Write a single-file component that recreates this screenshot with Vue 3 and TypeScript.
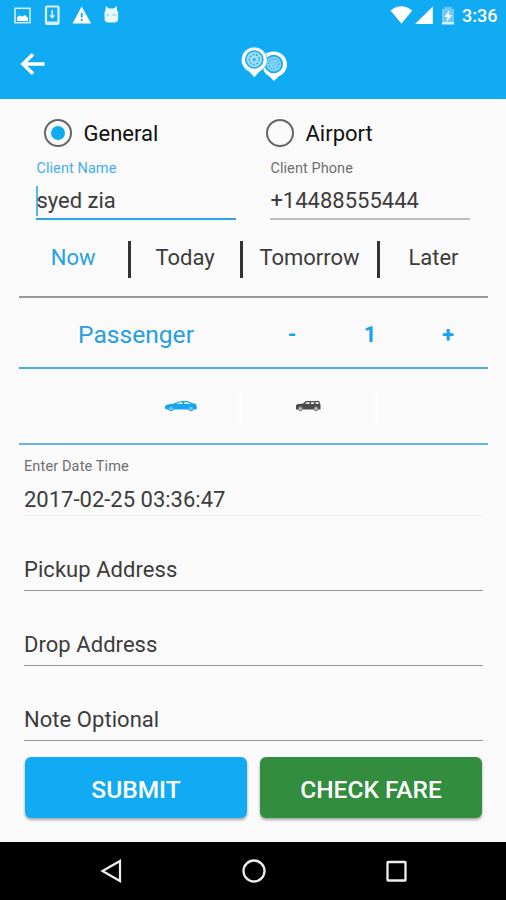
<script setup lang="ts">
import { ref } from 'vue'

const trip = ref<'General' | 'Airport'>('General')
const days = ['Now', 'Today', 'Tomorrow', 'Later']
const day = ref('Now')
const passengers = ref(1)
const notes = ['Pickup Address', 'Drop Address', 'Note Optional']
</script>

<template>
  <div class="screen">
    <header class="top">
      <div class="status">
        <svg class="status-icons" width="130" height="31" viewBox="0 0 130 31">
          <g fill="none" stroke="#d9f1ff" stroke-width="1.5">
            <rect x="15" y="8.3" width="15" height="14.4" />
            <rect x="46" y="6.5" width="12.5" height="17.5" rx="1" stroke-width="2.2" />
            <path d="M46 22.8h12.5" stroke-width="2.6" />
            <path d="M52.2 10v7M50 15.2l2.2 2.5 2.2-2.5" />
          </g>
          <path d="M17 21v-4l3-1.5 2 1 3-1.500 3 3V21z" fill="#fff" />
          <path fill-rule="evenodd" d="M81.700 6.500 91 23.500H72.500zM80.800 13v4.500h1.800V13zM80.800 19v2h1.800v-2z" fill="#fff" />
          <path d="M104.500 12 105.500 10.500 105.800 6 109 8.500h4.500L117 6v4.500l1.200 1.500v6.500q0 4-4 4h-5.700q-4 0-4-4z" fill="#e9f8ff" />
          <path d="M106.500 15h3M112.500 15h3.500" stroke="#6bcaf7" stroke-width="1.200" />
        </svg>
        <svg class="status-icons" width="74" height="31" viewBox="388 0 74 31">
          <path d="M390.500 10.500q10.800-8.500 21.700 0L401.500 23.800zM415 24l17.800-17.500V24z" fill="#fff" />
          <path d="M442 9h2.500V6.800h7V9h2.500v15h-12z" fill="#70cbf7" />
          <path d="m449.500 10-5 7h3l-1 5 5.500-7h-3.300z" fill="#fff" />
          <path d="M442 22h12v2.500h-12z" fill="#d9f1ff" />
        </svg>
        <span class="clock">3:36</span>
      </div>
      <div class="bar">
        <svg class="back" width="26" height="24" viewBox="0 0 26 24">
          <path d="M24.500 12H3M13 2.200 3 12l10 9.800" fill="none" stroke="#fff" stroke-width="3.600" />
        </svg>
        <svg class="logo" width="50" height="38" viewBox="239 45 50 38">
          <path d="M264.500 54.500Q268 51.500 274 51.500a13 13 0 0 1 13 13c0 6.500-5 10.500-8.500 12L274 81l-4.500-4.500q-4-1.800-6-6z" fill="#fff" />
          <circle cx="273.700" cy="64" r="9.300" fill="#11abf3" />
          <circle cx="273.700" cy="64" r="7.600" fill="#8ad4f8" />
          <circle cx="273.700" cy="64" r="5" fill="none" stroke="#25b0f3" stroke-width="1.200" stroke-dasharray="1.700 1.300" />
          <circle cx="273.700" cy="64" r="2" fill="none" stroke="#25b0f3" stroke-dasharray="1 1" />
          <path d="M254.300 47a13 13 0 0 1 13 13c0 6-4 9.500-8 12l-5 5.500-5-5.500c-4-2.500-8-6-8-12a13 13 0 0 1 13-13z" fill="#fff" stroke="#11abf3" stroke-width=".6" />
          <circle cx="254.300" cy="59.500" r="9.300" fill="#11abf3" />
          <circle cx="254.300" cy="59.500" r="7.800" fill="#a4ddfa" />
          <circle cx="254.300" cy="59.500" r="5" fill="none" stroke="#20aef3" stroke-width="1.400" stroke-dasharray="2 1.500" />
          <circle cx="254.300" cy="59.500" r="1.500" fill="#20aef3" />
        </svg>
      </div>
    </header>

    <main class="form">
      <div class="two radios">
        <label v-for="name in (['General', 'Airport'] as const)" :key="name" class="radio" @click="trip = name">
          <span class="ring"><span v-if="trip === name" class="dot" /></span>
          <span class="radio-name">{{ name }}</span>
        </label>
      </div>

      <div class="two client">
        <div class="field focused">
          <div class="label">Client Name</div>
          <div class="value"><span class="caret" /><span>syed zia</span></div>
        </div>
        <div class="field">
          <div class="label">Client Phone</div>
          <div class="value">+14488555444</div>
        </div>
      </div>

      <nav class="days">
        <button v-for="d in days" :key="d" class="day" :class="{ active: day === d }" @click="day = d">{{ d }}</button>
      </nav>

      <div class="passengers">
        <span class="title">Passenger</span>
        <button class="step" @click="passengers = Math.max(1, passengers - 1)">-</button>
        <span class="step">{{ passengers }}</span>
        <button class="step" @click="passengers++">+</button>
      </div>

      <div class="cars">
        <div class="car">
          <svg width="34" height="12" viewBox="0 0 34 12">
            <path d="M1 7q0-2 3-2.500l6-1Q14 1 18 1h4q3 0 6 2l4 1 1 4-1 1.500H2L1 8z" fill="#18a4ec" />
            <path d="m12 4 4-1.800h2.500V4zM20 2.200h2.500Q25 2.500 27 4h-7z" fill="#d9f1fc" />
            <circle cx="7" cy="8.500" r="2.300" fill="#74c8f3" stroke="#18a4ec" />
            <circle cx="27" cy="8.500" r="2.300" fill="#74c8f3" stroke="#18a4ec" />
          </svg>
        </div>
        <div class="car">
          <svg width="27" height="12" viewBox="0 0 27 12">
            <path d="M1 6q0-2 3-2l4-.5L11 1h13l1.500 4v4.500H1z" fill="#4a4a4a" />
            <path d="m10 4 2-2h2.500v2zM16 2h3v2h-3zM20.500 2H23l1 2h-3.500z" fill="#ddd" />
            <circle cx="5.500" cy="8.700" r="2" fill="#bbb" stroke="#777" />
            <circle cx="21" cy="8.700" r="2" fill="#bbb" stroke="#777" />
          </svg>
        </div>
      </div>

      <section class="details">
        <div class="date">
          <div class="label date-label">Enter Date Time</div>
          <div class="date-value">2017-02-25 03:36:47</div>
        </div>
        <div v-for="n in notes" :key="n" class="entry">{{ n }}</div>
        <div class="actions">
          <button class="action submit">SUBMIT</button>
          <button class="action fare">CHECK FARE</button>
        </div>
      </section>
    </main>

    <footer class="nav">
      <svg width="24" height="26" viewBox="0 0 24 26"><path d="M21 3v20L3.500 13z" fill="none" stroke="#eee" stroke-width="2.200" /></svg>
      <svg width="26" height="26" viewBox="0 0 26 26"><circle cx="13" cy="13" r="10.500" fill="none" stroke="#eee" stroke-width="2.300" /></svg>
      <svg width="24" height="26" viewBox="0 0 24 26"><rect x="2.500" y="4" width="18" height="18.500" rx=".5" fill="none" stroke="#eee" stroke-width="2.300" /></svg>
    </footer>
  </div>
</template>

<style>
body {
  margin: 0;
}
</style>

<style scoped>
.screen {
  box-sizing: border-box;
  width: 506px;
  height: 900px;
  display: flex;
  flex-direction: column;
  background: #fafafa;
  color: #3c3c3c;
  font: 400 22px 'Roboto', sans-serif;
  overflow: hidden;
}
.screen * {
  box-sizing: border-box;
}
button {
  margin: 0;
  padding: 0;
  border: 0;
  background: none;
  font: inherit;
  color: inherit;
}
svg {
  display: block;
}
.top {
  height: 98.500px;
  background: #11abf3;
  color: #fff;
}
.status {
  height: 31px;
  display: grid;
  grid-template-columns: 388px 74px 1fr;
  align-items: center;
}
.clock {
  font-size: 18px;
  font-weight: 500;
}
.bar {
  height: 67px;
  display: grid;
  grid-template-columns: 239px 1fr;
  padding-top: 14px;
}
.back {
  margin: 7px 0 0 19.500px;
}
.form {
  height: 743px;
}
.two {
  display: grid;
  grid-template-columns: 200px 200px;
  column-gap: 34px;
  padding-left: 36.400px;
}
.radios {
  padding-top: 15px;
  grid-template-columns: 222px 200px;
  column-gap: 0;
  padding-left: 43.500px;
}
.radio {
  height: 39px;
  display: flex;
  align-items: center;
  gap: 12px;
  color: #111;
}
.ring {
  width: 28px;
  height: 28px;
  border: 2.500px solid #666;
  border-radius: 50%;
  display: grid;
  place-items: center;
}
.dot {
  width: 14px;
  height: 14px;
  border-radius: 50%;
  background: #11abf3;
}
.label {
  height: 31px;
  line-height: 31px;
  font-size: 14.500px;
  letter-spacing: 0.080px;
  color: #707070;
}
.field .value {
  height: 36px;
  line-height: 34px;
  padding-top: 1px;
  display: flex;
  align-items: center;
  border-bottom: 2px solid #bdbdbd;
}
.focused .label {
  color: #45aeea;
}
.focused .value {
  border-color: #2aa5e5;
}
.caret {
  width: 2px;
  height: 30px;
  margin-right: -2px;
  background: #55b6ec;
}
.days {
  height: 78px;
  margin: 0 18.500px 0 19px;
  padding-top: 3px;
  display: grid;
  grid-template-columns: 111.500px 112px 137px 1fr;
  align-items: center;
  border-bottom: 2px solid #999;
}
.day {
  height: 37px;
  line-height: 34px;
  padding-bottom: 3px;
  border-right: 3px solid #333;
}
.day:last-child {
  border: 0;
}
.active,
.passengers {
  color: #279fe0;
}
.passengers {
  height: 71px;
  margin: 0 18.500px 0 19px;
  padding-top: 4px;
  display: grid;
  grid-template-columns: 234px 78px 78px 78px;
  align-items: center;
  text-align: center;
  border-bottom: 2px solid #48ade0;
}
.title {
  font-size: 24.600px;
}
.step {
  font-weight: 700;
  color: #18a4ec;
}
.cars {
  height: 76px;
  margin: 0 18.500px 0 19px;
  padding-left: 105px;
  display: grid;
  grid-template-columns: 119px 136px;
  align-items: center;
  border-bottom: 2px solid #64b5e8;
}
.car {
  height: 38px;
  display: flex;
  align-items: center;
  justify-content: center;
  border-right: 5px solid #fdfdfd;
}
.details {
  padding: 0 23.500px 0 24px;
}
.date {
  height: 71px;
  padding-top: 6px;
  border-bottom: 1px solid #f0f0f0;
}
.date-label {
  letter-spacing: 0.130px;
}
.date-value {
  line-height: 36px;
}
.entry {
  height: 75px;
  padding-top: 35px;
  line-height: 38px;
  letter-spacing: 0.050px;
  border-bottom: 1.500px solid #999;
}
.actions {
  display: grid;
  grid-template-columns: 222px 222px;
  column-gap: 13px;
  padding: 16px 0 0 1px;
}
.action {
  height: 61px;
  padding-top: 4px;
  border-radius: 6px;
  color: #fff;
  font-size: 24.500px;
  font-weight: 500;
  box-shadow: 0 2px 3px #0005;
}
.submit {
  background: #11abf3;
}
.fare {
  background: #338d3e;
}
.nav {
  flex: 1;
  display: grid;
  grid-template-columns: 24px 26px 24px;
  justify-content: center;
  column-gap: 118px;
  align-items: center;
  padding-left: 1px;
  background: #000;
}
</style>
